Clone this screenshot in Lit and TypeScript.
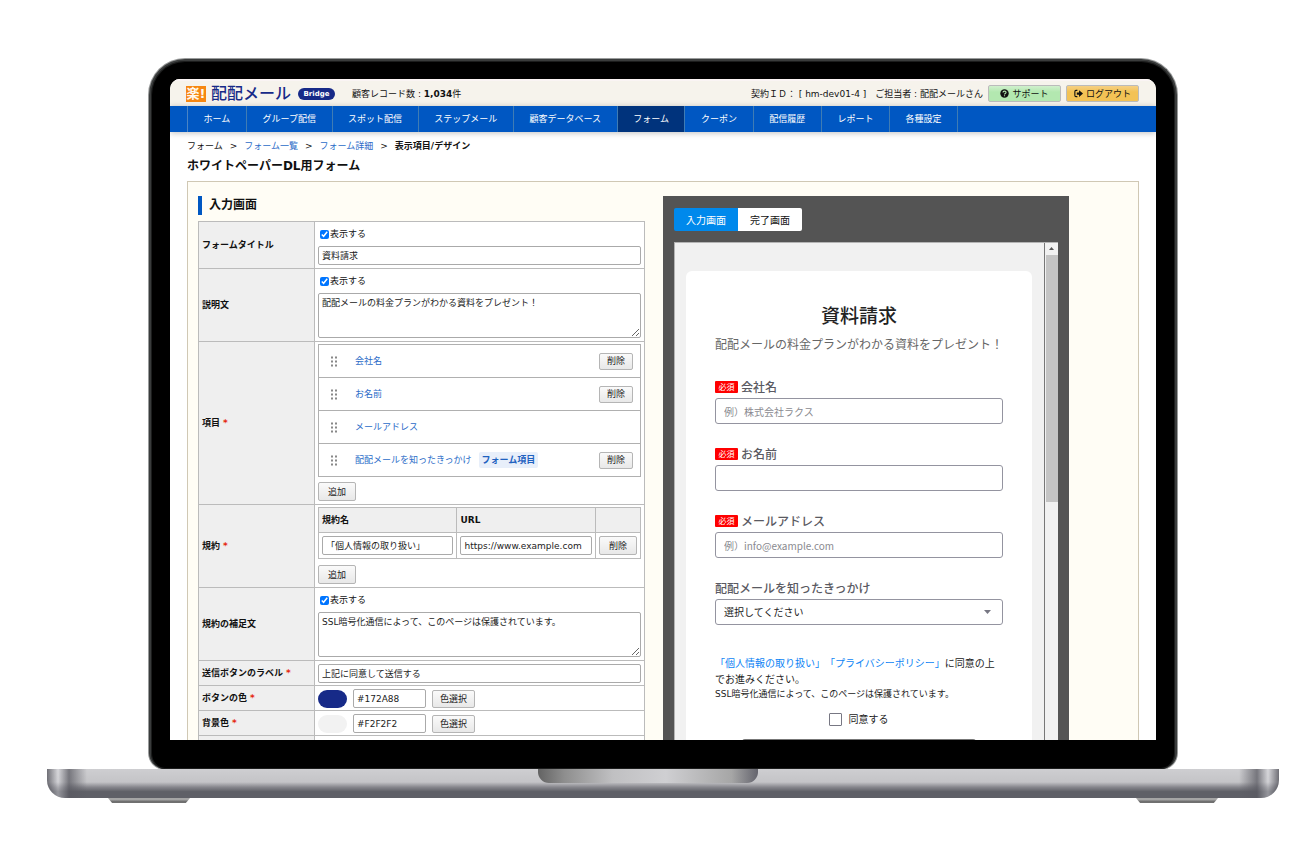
import { LitElement, html, css, svg } from "lit";
import { customElement } from "lit/decorators.js";
import { classMap } from "lit/directives/class-map.js";

const NAV = ["ホーム", "グループ配信", "スポット配信", "ステップメール", "顧客データベース", "フォーム", "クーポン", "配信履歴", "レポート", "各種設定"];

const ITEMS = [
  { name: "会社名", removable: true, tag: "" },
  { name: "お名前", removable: true, tag: "" },
  { name: "メールアドレス", removable: false, tag: "" },
  { name: "配配メールを知ったきっかけ", removable: true, tag: "フォーム項目" },
];

const FIELDS = [
  { id: "company", label: "会社名", hint: "例）株式会社ラクス" },
  { id: "person", label: "お名前", hint: "" },
  { id: "mail", label: "メールアドレス", hint: "例）info@example.com" },
];

const COLORS = [
  { id: "btn-color", label: "ボタンの色", value: "#172A88" },
  { id: "bg-color", label: "背景色", value: "#F2F2F2" },
];

@customElement("site-header")
class SiteHeader extends LitElement {
  static styles = css`
    :host { display: block; position: relative; z-index: 1; }
    * { box-sizing: border-box; }
    .bar {
      display: flex; align-items: center; height: 27px; padding: 0 17px 0 16px;
      background: #f6f3ec; border-top: 2px solid #faf4f4; white-space: nowrap;
    }
    .mark {
      display: flex; justify-content: center; width: 20px; height: 16px; background: #f68712; color: #fff8ee;
      font-size: 13px; font-weight: 700; line-height: 16px;
    }
    .brand { margin-left: 5px; font-size: 16px; line-height: 20px; font-weight: 500; color: #172a88; }
    .pill {
      margin-left: 7px; width: 37px; height: 12px; border-radius: 6px; background: #172a88; color: #fff;
      font-size: 7px; font-weight: 700; line-height: 12px; text-align: center;
    }
    .count { margin-left: 17px; }
    .user { margin-left: auto; display: flex; gap: 9px; }
    .btn {
      display: flex; align-items: center; justify-content: center; gap: 3px; width: 73px; height: 17px;
      margin-left: 5px; padding: 0; border: 1px solid #bbb; border-radius: 2px; font: inherit; color: #111;
    }
    .btn svg { width: 9px; height: 9px; }
    .support { background: linear-gradient(#d0f0cd, #b3e8b0 40%); }
    .logout { background: linear-gradient(#f6d084, #f3c255 40%); }
    nav { background: #0057c2; box-shadow: 0 1px 6px rgba(0, 0, 0, 0.25); padding: 0 17px; }
    ul { display: flex; width: 81%; margin: 0; padding: 0; list-style: none; border-left: 1px solid #4a84c4; }
    li { flex: 1 1 auto; border-right: 1px solid #3f7cb4; }
    a {
      display: block; padding: 0 14px; line-height: 26px; text-align: center; white-space: nowrap;
      color: #fff; text-decoration: none;
    }
    .on { background: #00337c; }
  `;
  render() {
    return html`
      <div class="bar">
        <span class="mark">楽!</span>
        <span class="brand">配配メール</span>
        <span class="pill">Bridge</span>
        <span class="count">顧客レコード数 : <b>1,034</b>件</span>
        <span class="user"><span>契約ＩＤ： [ hm-dev01-4 ]</span><span>ご担当者 : 配配メールさん</span></span>
        <button class="btn support">
          <svg viewBox="0 0 16 16" aria-hidden="true"><circle cx="8" cy="8" r="7.5" fill="#111" /><path d="M5.3 6.2C5.4 2.8 10.9 3 10.7 6.1 10.6 7.9 8 8 8 9.8M8 11v2" fill="none" stroke="#b3e8b0" stroke-width="2" /></svg>サポート
        </button>
        <button class="btn logout">
          <svg viewBox="0 0 16 16" aria-hidden="true"><path d="M6 2.5H3.5Q1.5 2.5 1.5 5v6q0 2.500 2 2.500H6" fill="none" stroke="#111" stroke-width="2" /><path d="M5 6h4V2l7 6-7 6v-4H5z" fill="#111" /></svg>ログアウト
        </button>
      </div>
      <nav><ul>${NAV.map((n) => html`<li class=${classMap({ on: n === "フォーム" })}><a href="#">${n}</a></li>`)}</ul></nav>
    `;
  }
}

@customElement("form-editor")
class FormEditor extends LitElement {
  static styles = css`
    :host { display: block; }
    * { box-sizing: border-box; }
    h2 { margin: 0 0 6px; padding-left: 7px; border-left: 4px solid #0057c2; font-size: 12px; line-height: 19px; }
    table { width: 100%; border-collapse: collapse; table-layout: fixed; background: #fff; }
    th, td { border: 1px solid #bbb; padding: 2px 3px 3px; vertical-align: top; }
    th { width: 26%; background: #efefef; text-align: left; vertical-align: middle; white-space: nowrap; }
    .req { color: #e5260b; margin-left: 3px; }
    .check { display: flex; align-items: center; gap: 1px; height: 20px; margin-bottom: 2px; padding-left: 2px; }
    .check input { width: 9px; height: 9px; margin: 0; accent-color: #0075ff; }
    .text, textarea {
      display: block; width: 100%; border: 1px solid #aaa; border-radius: 2px; background: #fff;
      color: #222; font: inherit; padding: 0 3px;
    }
    .text { height: 19px; }
    textarea { height: 45px; line-height: 13px; padding-top: 3px; }
    button {
      height: 19px; padding: 0 9px; border: 1px solid #b5b5b5; border-radius: 2px; font: inherit; color: #222;
      background: linear-gradient(#fafafa, #e8e8e8); white-space: nowrap;
    }
    .items { margin: 0 0 5px; padding: 0; list-style: none; border: 1px solid #b0b0b0; border-bottom: 0; }
    .items li { display: flex; align-items: center; height: 33px; padding: 0 7px 0 12px; border-bottom: 1px solid #b0b0b0; }
    .items svg { width: 6px; height: 11px; margin-right: 18px; }
    .items a { color: #2b6cc8; text-decoration: none; }
    .tag { margin-left: 7px; padding: 0 3px; border-radius: 2px; background: #e8effa; color: #1f62c0; font-weight: 700; line-height: 16px; }
    .items button { margin-left: auto; height: 17px; padding: 0 7px; }
    .terms { margin-bottom: 6px; }
    .terms th { width: auto; height: 25px; padding: 0 3px; }
    .terms td { height: 26px; padding: 3px; }
    .terms .end { width: 45px; }
    .terms td button { width: 100%; padding: 0; }
    .compact { padding: 3px 3px 2px; }
    .color { display: flex; align-items: center; gap: 6px; }
    .swatch { width: 29px; height: 18px; border-radius: 9px; }
    .color .text { width: 73px; }
    .color button { height: 18px; padding: 0 7px; }
  `;
  private check(label: string) {
    return html`<label class="check"><input type="checkbox" checked aria-label=${label} />表示する</label>`;
  }
  private req() {
    return html`<span class="req">*</span>`;
  }
  render() {
    const dots = [0, 4, 8].map((y) => svg`<rect x="0" y=${y} width="2" height="2" /><rect x="4" y=${y} width="2" height="2" />`);
    return html`
      <h2>入力画面</h2>
      <table>
        <tr>
          <th scope="row"><label for="title">フォームタイトル</label></th>
          <td>${this.check("フォームタイトルを表示する")}<input id="title" class="text" value="資料請求" /></td>
        </tr>
        <tr>
          <th scope="row"><label for="desc">説明文</label></th>
          <td>${this.check("説明文を表示する")}<textarea id="desc" .value=${"配配メールの料金プランがわかる資料をプレゼント！"}></textarea></td>
        </tr>
        <tr>
          <th scope="row">項目${this.req()}</th>
          <td>
            <ul class="items">
              ${ITEMS.map((i) => html`<li>
                <svg viewBox="0 0 6 10" fill="#888" aria-hidden="true">${dots}</svg>
                <a href="#">${i.name}</a>
                ${i.tag ? html`<span class="tag">${i.tag}</span>` : ""}
                ${i.removable ? html`<button>削除</button>` : ""}
              </li>`)}
            </ul>
            <button>追加</button>
          </td>
        </tr>
        <tr>
          <th scope="row">規約${this.req()}</th>
          <td>
            <table class="terms">
              <tr><th scope="col">規約名</th><th scope="col">URL</th><th class="end"></th></tr>
              <tr>
                <td><input class="text" aria-label="規約名" value="「個人情報の取り扱い」" /></td>
                <td><input class="text" aria-label="URL" value="https://www.example.com" /></td>
                <td><button>削除</button></td>
              </tr>
            </table>
            <button>追加</button>
          </td>
        </tr>
        <tr>
          <th scope="row"><label for="note">規約の補足文</label></th>
          <td>${this.check("規約の補足文を表示する")}<textarea id="note" .value=${"SSL暗号化通信によって、このページは保護されています。"}></textarea></td>
        </tr>
        <tr>
          <th scope="row"><label for="send">送信ボタンのラベル</label>${this.req()}</th>
          <td class="compact"><input id="send" class="text" value="上記に同意して送信する" /></td>
        </tr>
        ${COLORS.map((c) => html`<tr>
          <th scope="row"><label for=${c.id}>${c.label}</label>${this.req()}</th>
          <td class="compact">
            <div class="color">
              <span class="swatch" style="background:${c.value}"></span>
              <input id=${c.id} class="text" value=${c.value} />
              <button>色選択</button>
            </div>
          </td>
        </tr>`)}
        <tr><th></th><td></td></tr>
      </table>
    `;
  }
}

@customElement("form-preview")
class FormPreview extends LitElement {
  static styles = css`
    :host { display: block; padding: 12px 11px; background: #545454; font-family: "Noto Sans CJK JP", sans-serif; font-size: 10px; }
    * { box-sizing: border-box; }
    .tabs { display: flex; margin-bottom: 11px; }
    .tabs button { height: 23px; padding: 0 12px; border: 0; background: #fff; color: #111; font: inherit; border-radius: 0 2px 2px 0; }
    .tabs .on { background: #0089ec; color: #fff; border-radius: 2px 0 0 2px; }
    .frame { display: flex; border: 1px solid #b4b4b4; border-width: 1px 0 0 1px; background: #f1f1f1; }
    .page { flex: 1; min-width: 0; padding: 28px 12px 40px 11px; }
    .bar { width: 14px; border-left: 1px solid #777; background: #f1f1f1; }
    .bar svg { display: block; width: 13px; height: 12px; }
    .thumb { height: 247px; margin-left: 1px; background: #c4c4c4; }
    .card { padding: 30px 29px; border-radius: 6px; background: #fff; }
    h3 { margin: 0; font-size: 19px; line-height: 28px; font-weight: 500; text-align: center; color: #222; }
    .lead { display: flex; justify-content: center; margin: 6px 0 24px; font-size: 12px; line-height: 18px; color: #666; white-space: nowrap; }
    .field { margin-bottom: 20px; }
    .label { display: flex; align-items: center; gap: 3px; height: 20px; margin-bottom: 1px; font-size: 12px; font-weight: 500; color: #5a5a62; }
    .must { width: 23px; background: #f00; color: #fff; border-radius: 1px; font-size: 8px; font-weight: 400; line-height: 12px; text-align: center; }
    .input { display: block; width: 100%; height: 26px; padding: 0 8px; border: 1px solid #9494a0; border-radius: 3px; background: #fff; color: #222; font: inherit; }
    .input::placeholder { color: #8a8a90; }
    .pick { display: grid; align-items: center; }
    .pick > * { grid-area: 1 / 1; }
    select.input { appearance: none; }
    .pick svg { justify-self: end; margin-right: 12px; width: 7px; height: 4px; pointer-events: none; }
    .lines { padding-top: 10px; }
    p { margin: 0; line-height: 16px; color: #222; text-spacing-trim: space-all; }
    a { color: #0d84f5; text-decoration: none; }
    .note { font-size: 9px; line-height: 15px; font-family: "DejaVu Sans", "Noto Sans CJK JP", sans-serif; }
    .agree { display: flex; justify-content: center; align-items: center; gap: 6px; height: 20px; margin: 7px 0 10px; color: #222; }
    .agree input { appearance: none; width: 13px; height: 13px; margin: 0; border: 1px solid #777783; border-radius: 1px; background: #fff; }
    .send { display: block; width: 81%; height: 34px; margin: 0 auto; border: 0; border-radius: 3px; background: #777; color: #fff; font: inherit; }
  `;
  render() {
    return html`
      <div class="tabs"><button class="on">入力画面</button><button>完了画面</button></div>
      <div class="frame">
        <div class="page">
          <div class="card">
            <h3>資料請求</h3>
            <div class="lead">配配メールの料金プランがわかる資料をプレゼント！</div>
            ${FIELDS.map((f) => html`<div class="field">
              <label class="label" for=${f.id}><span class="must">必須</span>${f.label}</label>
              <input class="input" id=${f.id} placeholder=${f.hint} />
            </div>`)}
            <div class="field">
              <label class="label" for="reason">配配メールを知ったきっかけ</label>
              <div class="pick">
                <select class="input" id="reason"><option>選択してください</option></select>
                <svg viewBox="0 0 7 4" aria-hidden="true"><path d="M0 0h7L3.500 4z" fill="#777783" /></svg>
              </div>
            </div>
            <div class="lines">
              <p><a href="#">「個人情報の取り扱い」</a><a href="#">「プライバシーポリシー」</a>に同意の上でお進みください。</p>
              <p class="note">SSL暗号化通信によって、このページは保護されています。</p>
            </div>
            <label class="agree"><input type="checkbox" />同意する</label>
            <button class="send" aria-label="上記に同意して送信する"></button>
          </div>
        </div>
        <div class="bar">
          <svg viewBox="0 0 13 12" aria-hidden="true"><path d="M4 7h5L6.500 4z" fill="#555" /></svg>
          <div class="thumb"></div>
        </div>
      </div>
    `;
  }
}

@customElement("app-root")
class AppRoot extends LitElement {
  static styles = css`
    :host {
      display: block; height: 100vh; padding: 59px 19px 0 47px; box-sizing: border-box; overflow: hidden;
      background: #fff; color: #111; font-family: "DejaVu Sans", "Noto Sans CJK JP", sans-serif; font-size: 9px; line-height: 14px;
    }
    * { box-sizing: border-box; }
    .lid {
      margin: 0 102px; padding: 18px 19px 29px; background: #000; border: 2px solid #3a3c3c; border-bottom: 0;
      border-radius: 36px 36px 16px 16px; box-shadow: inset 0 0 0 1px #1c1d1d, 0 0 0 1px #9a9c9c;
    }
    .screen { height: calc(100vh - 184px); overflow: hidden; background: #fff; border-radius: 10px 10px 0 0; }
    main { padding: 7px 17px 0; }
    .crumbs { display: flex; gap: 7px; line-height: 14px; }
    .crumbs a { color: #2b6cc8; text-decoration: none; }
    h1 { margin: 4px 0 6px; font-size: 12px; line-height: 18px; }
    .panel {
      display: grid; grid-template-columns: 447fr 406fr; column-gap: 18px; padding: 14px 69px 14px 10px;
      border: 1px solid #d0c8b4; background: #fffdf5;
    }
    .base {
      display: flex; justify-content: center; height: 29px; padding-right: 30px; border-radius: 0 0 18px 18px;
      background:
        linear-gradient(90deg, rgba(80, 80, 88, 0.75), rgba(230, 230, 235, 0.4) 11px, rgba(90, 90, 98, 0.75) 22px, transparent 40px, transparent calc(100% - 40px), rgba(90, 90, 98, 0.75) calc(100% - 22px), rgba(230, 230, 235, 0.4) calc(100% - 11px), rgba(80, 80, 88, 0.75)),
        linear-gradient(#ceced1, #c4c4c7 45%, #85858b 63%, #5f6067 78%, #5f6067);
    }
    .notch {
      width: 220px; height: 14px; border-radius: 0 0 11px 11px;
      background: linear-gradient(90deg, #636363, #8e8e8e 12%, #c0c0c2 34%, #cfcfd2 58%, #a6a6a6 88%, #64646d);
    }
    .feet { display: flex; justify-content: space-between; padding: 0 61px; }
    .foot { width: 82px; height: 5px; background: linear-gradient(#a5a5a5 40%, #707070 60%); clip-path: polygon(0 0, 100% 0, 95% 100%, 5% 100%); }
  `;
  render() {
    return html`
      <div class="lid">
        <div class="screen">
          <site-header></site-header>
          <main>
            <div class="crumbs">
              <span>フォーム</span><span>&gt;</span><a href="#">フォーム一覧</a><span>&gt;</span><a href="#">フォーム詳細</a><span>&gt;</span><b>表示項目/デザイン</b>
            </div>
            <h1>ホワイトペーパーDL用フォーム</h1>
            <div class="panel">
              <form-editor></form-editor>
              <form-preview></form-preview>
            </div>
          </main>
        </div>
      </div>
      <div class="base"><div class="notch"></div></div>
      <div class="feet"><div class="foot"></div><div class="foot"></div></div>
    `;
  }
}
